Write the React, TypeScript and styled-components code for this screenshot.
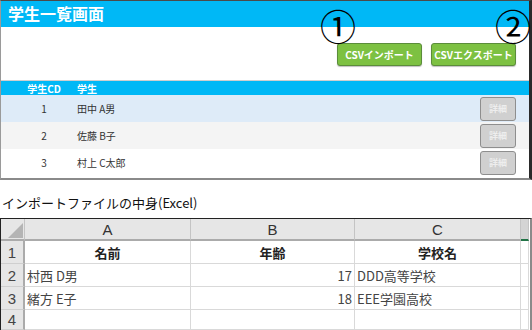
import React from "react";
import styled, { createGlobalStyle } from "styled-components";

const GlobalStyle = createGlobalStyle`
  body {
    margin: 0;
    background: #ffffff;
    font-family: "Noto Sans CJK JP", "Liberation Sans", sans-serif;
  }
`;

const students = [
    { cd: 1, name: "田中 A男", bg: "#deebf8" },
    { cd: 2, name: "佐藤 B子", bg: "#f4f4f4" },
    { cd: 3, name: "村上 C太郎", bg: "#ffffff" },
];

const sheetRows = [
    { no: 1, cells: ["名前", "年齢", "学校名"], head: true },
    { no: 2, cells: ["村西 D男", "17", "DDD高等学校"], head: false },
    { no: 3, cells: ["緒方 E子", "18", "EEE学園高校"], head: false },
    { no: 4, cells: ["", "", ""], head: false },
];

export default function App() {
    return (
        <Page>
            <GlobalStyle />
            <Panel>
                <Header>学生一覧画面</Header>
                <Toolbar>
                    <GreenButton>CSVインポート</GreenButton>
                    <GreenButton>CSVエクスポート</GreenButton>
                </Toolbar>
                <Marker $left={319}>①</Marker>
                <Marker $left={494}>②</Marker>
                <Divider />
                <HeadRow>
                    <CdCell>学生CD</CdCell>
                    <NameCell>学生</NameCell>
                </HeadRow>
                {students.map((s) => (
                    <Row key={s.cd} $bg={s.bg}>
                        <CdCell>{s.cd}</CdCell>
                        <NameCell>{s.name}</NameCell>
                        <DetailButton>詳細</DetailButton>
                    </Row>
                ))}
            </Panel>

            <Caption>インポートファイルの中身(Excel)</Caption>

            <Sheet>
                <Corner>
                    <svg width="25" height="22" viewBox="0 0 25 22">
                        <polygon points="7,19 22,19 22,4" fill="#b4b4b4" />
                    </svg>
                </Corner>
                <ColHead>A</ColHead>
                <ColHead>B</ColHead>
                <ColHead>C</ColHead>
                <ColHead $active />
                {sheetRows.map((r) => (
                    <React.Fragment key={r.no}>
                        <RowHead>{r.no}</RowHead>
                        <Cell $align={r.head ? "center" : "left"} $bold={r.head}>{r.cells[0]}</Cell>
                        <Cell $align={r.head ? "center" : "right"} $bold={r.head}>{r.cells[1]}</Cell>
                        <Cell $align={r.head ? "center" : "left"} $bold={r.head}>{r.cells[2]}</Cell>
                        <Cell $align="left" />
                    </React.Fragment>
                ))}
            </Sheet>
        </Page>
    );
}

const Page = styled.div`
    width: 532px;
    height: 330px;
    overflow: hidden;
`;

const Panel = styled.div`
    position: relative;
    box-sizing: border-box;
    width: 532px;
    height: 180px;
    border-top: 1px solid #4a4a4a;
    border-left: 1px solid #9a9a9a;
    border-right: 3px solid #2a2a2a;
    border-bottom: 2px solid #8a8a8a;
`;

const Header = styled.div`
    height: 26px;
    background: #00b8f6;
    color: #ffffff;
    font-size: 16px;
    font-weight: bold;
    line-height: 24px;
    padding-left: 7px;
`;

const Toolbar = styled.div`
    height: 53px;
    display: flex;
    justify-content: flex-end;
    align-items: flex-start;
    gap: 9px;
    padding: 16px 13px 0 0;
    box-sizing: border-box;
`;

const GreenButton = styled.div`
    box-sizing: border-box;
    width: 85px;
    height: 23px;
    background: #7dc142;
    border: 1px solid #5b8d3a;
    border-radius: 3px;
    color: #ffffff;
    font-size: 10px;
    font-weight: bold;
    display: flex;
    align-items: center;
    justify-content: center;
    box-shadow: 0 1px 1px rgba(0, 0, 0, 0.25);
`;

const Marker = styled.div<{ $left: number }>`
    position: absolute;
    top: 2px;
    left: ${(p) => p.$left}px;
    font-family: "Noto Sans CJK JP", sans-serif;
    font-size: 36px;
    line-height: 44px;
    color: #000000;
`;

const Divider = styled.div`
    height: 1px;
    background: #cfcfcf;
`;

const HeadRow = styled.div`
    height: 14px;
    background: #00b8f6;
    color: #ffffff;
    font-size: 10px;
    font-weight: bold;
    display: flex;
    align-items: center;
`;

const Row = styled.div<{ $bg: string }>`
    height: 27px;
    background: ${(p) => p.$bg};
    color: #333333;
    font-size: 10px;
    display: flex;
    align-items: center;
`;

const CdCell = styled.div`
    width: 62px;
    padding-left: 12px;
    text-align: center;
`;

const NameCell = styled.div`
    flex: 1;
    padding-left: 2px;
`;

const DetailButton = styled.div`
    box-sizing: border-box;
    width: 36px;
    height: 24px;
    margin-right: 13px;
    background: #d0d0d0;
    border: 1px solid #8e8e8e;
    border-radius: 3px;
    color: #eeeeee;
    font-size: 9px;
    font-weight: bold;
    display: flex;
    align-items: center;
    justify-content: center;
`;

const Caption = styled.div`
    margin: 13px 0 6px 2px;
    font-size: 13px;
    line-height: 19px;
    color: #111111;
`;

const Sheet = styled.div`
    display: grid;
    grid-template-columns: 24px 166px 164px 166px 8px;
    grid-template-rows: 22px 23px 23px 23px 20px;
    width: 532px;
    box-sizing: border-box;
    border-top: 1px solid #222222;
    border-left: 1px solid #222222;
    border-right: 2px solid #8a8a8a;
    border-bottom: 1px solid #8a8a8a;
`;

const Corner = styled.div`
    background: #e6e6e6;
    border-right: 1px solid #c4c4c4;
    border-bottom: 2px solid #ababab;
    box-sizing: border-box;
    overflow: hidden;
`;

const ColHead = styled.div<{ $active?: boolean }>`
    background: ${(p) => (p.$active ? "#d4d4d4" : "#e6e6e6")};
    border-right: 1px solid #c4c4c4;
    border-bottom: 2px solid ${(p) => (p.$active ? "#217346" : "#ababab")};
    box-sizing: border-box;
    color: #333333;
    font-family: "Liberation Sans", sans-serif;
    font-size: 15px;
    display: flex;
    align-items: center;
    justify-content: center;
`;

const RowHead = styled.div`
    background: #e6e6e6;
    border-right: 2px solid #ababab;
    border-bottom: 1px solid #cfcfcf;
    box-sizing: border-box;
    color: #444444;
    font-family: "Liberation Sans", sans-serif;
    font-size: 15px;
    display: flex;
    align-items: center;
    justify-content: center;
`;

const Cell = styled.div<{ $align: "left" | "center" | "right"; $bold?: boolean }>`
    border-right: 1px solid #d9d9d9;
    border-bottom: 1px solid #d9d9d9;
    box-sizing: border-box;
    padding: 0 2px;
    color: ${(p) => (p.$bold ? "#222222" : "#444444")};
    font-size: 13px;
    font-weight: ${(p) => (p.$bold ? "bold" : "normal")};
    display: flex;
    align-items: center;
    justify-content: ${(p) =>
        p.$align === "center" ? "center" : p.$align === "right" ? "flex-end" : "flex-start"};
    white-space: nowrap;
`;
